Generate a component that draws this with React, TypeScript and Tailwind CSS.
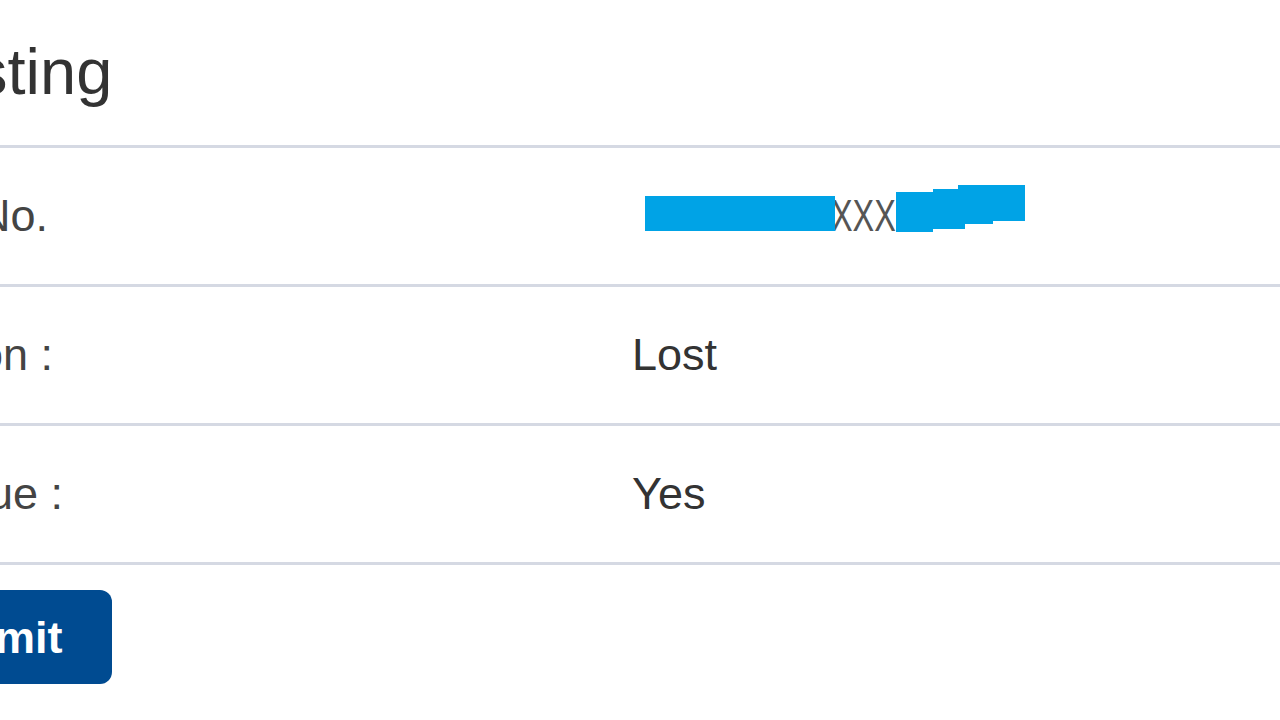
import React from "react";

const rows = [
  { label: "No.", shift: "-ml-[22px]", value: null },
  { label: "on :", shift: "-ml-[22px]", value: "Lost" },
  { label: "ue :", shift: "-ml-[12px]", value: "Yes" },
];

const Redacted = () => (
  <div className="flex items-center h-full">
    {/* first blue block */}
    <div className="ml-[13px] mt-[-6px] w-[190px] h-[35px] bg-[#00a3e6]"></div>
    <span className="block w-[62px] overflow-hidden mt-[-2px]">
      <span className="block origin-left scale-x-[0.72] -ml-[4px] text-[45px] leading-none text-[#555] whitespace-nowrap">XXX</span>
    </span>
    {/* scribble over the rest */}
    <svg className="relative z-10 -ml-[1px] mt-[-14px]" width="130" height="48" viewBox="0 0 130 48">
      <polygon
        fill="#00a3e6"
        points="0,7 37,7 37,4 62,4 62,0 129,0 129,36 97,36 97,39 69,39 69,44 37,44 37,47 0,47"
      />
    </svg>
  </div>
);

export default function App() {
  return (
    <div className="w-[1280px] h-[720px] overflow-hidden bg-white" style={{ fontFamily: '"Liberation Sans", Arial, sans-serif' }}>
      <div className="h-[145px] pt-[40px]">
        <h3 className="-ml-[25px] text-[65px] leading-[64px] text-[#333] whitespace-nowrap">sting</h3>
      </div>

      {rows.map((r, i) => (
        <div key={i} className="grid grid-cols-[632px_1fr] h-[139px] border-t-[3px] border-[#d5d9e3] items-center">
          <div className={`${r.shift} text-[45px] text-[#444] whitespace-nowrap`}>{r.label}</div>
          {r.value ? (
            <div className="text-[45px] text-[#333]">{r.value}</div>
          ) : (
            <Redacted />
          )}
        </div>
      ))}

      <div className="border-t-[3px] border-[#d5d9e3] pt-[25px]">
        <button className="-ml-[45px] h-[94px] pl-[40px] pr-[49px] rounded-[12px] bg-[#004b91] text-white text-[45px] font-bold leading-none">
          mit
        </button>
      </div>
    </div>
  );
}
